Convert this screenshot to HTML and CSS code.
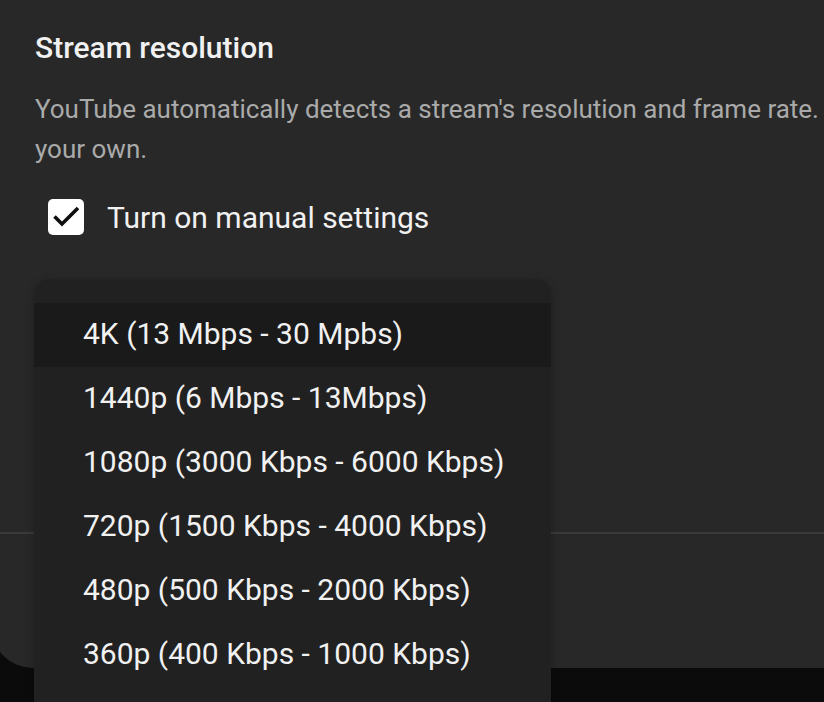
FILE: index.html
```html
<!DOCTYPE html>
<html>
<head>
<meta charset="utf-8">
<link rel="stylesheet" href="styles.css">
</head>
<body>
<div class="page">
  <div class="panel">
    <section class="content">
      <h2 class="title">Stream resolution</h2>
      <p class="desc"><span class="line">YouTube automatically detects a stream's resolution and frame rate. You can also set</span><br>your own.</p>
      <label class="check-row">
        <span class="checkbox">
          <svg viewBox="0 0 36 36" width="36" height="36"><path d="M6.5 17.5L14 25L30 9" fill="none" stroke="#0f0f0f" stroke-width="3.6"/></svg>
        </span>
        <span class="check-label">Turn on manual settings</span>
      </label>
    </section>
    <div class="footer"></div>
  </div>
  <ul class="menu">
    <li class="item selected">4K (13 Mbps - 30 Mpbs)</li>
    <li class="item">1440p (6 Mbps - 13Mbps)</li>
    <li class="item">1080p (3000 Kbps - 6000 Kbps)</li>
    <li class="item">720p (1500 Kbps - 4000 Kbps)</li>
    <li class="item">480p (500 Kbps - 2000 Kbps)</li>
    <li class="item">360p (400 Kbps - 1000 Kbps)</li>
  </ul>
</div>
</body>
</html>
```
FILE: styles.css
```css
html, body {
  margin: 0;
  padding: 0;
  background: #0b0b0b;
  overflow: hidden;
  width: 824px;
  height: 702px;
}
.page {
  position: relative;
  width: 824px;
  height: 702px;
  overflow: hidden;
  font-family: Roboto, "Noto Sans", sans-serif;
}
.panel {
  width: 1100px;
  height: 668px;
  margin-left: -9px;
  background: #282828;
  border-bottom-left-radius: 42px;
  display: flex;
  flex-direction: column;
}
.content {
  padding: 30px 44px 0;
  height: 532px;
  box-sizing: border-box;
}
.title {
  margin: 0;
  font-size: 30px;
  line-height: 36px;
  font-weight: 500;
  color: #f1f1f1;
}
.desc {
  margin: 23px 0 0;
  font-size: 26px;
  line-height: 40px;
  color: #aaaaaa;
}
.desc .line {
  white-space: nowrap;
}
.check-row {
  display: flex;
  align-items: center;
  gap: 23px;
  margin: 30px 0 0 13px;
}
.checkbox {
  width: 36px;
  height: 36px;
  border-radius: 5px;
  background: #ffffff;
  display: flex;
}
.checkbox svg {
  width: 36px;
  height: 36px;
}
.check-label {
  font-size: 30px;
  color: #f1f1f1;
}
.footer {
  border-top: 2px solid #3a3a3a;
  flex: 1;
}
.menu {
  position: absolute;
  left: 34px;
  top: 279px;
  width: 517px;
  height: 460px;
  margin: 0;
  padding: 24px 0 0;
  list-style: none;
  background: #212121;
  border-radius: 16px;
  box-shadow: 0 2px 8px rgba(0,0,0,0.25);
  box-sizing: border-box;
}
.item {
  height: 64px;
  box-sizing: border-box;
  padding: 0 0 4px 49px;
  display: flex;
  align-items: center;
  font-size: 30px;
  color: #f1f1f1;
}
.item.selected {
  background: #1a1a1a;
}
```
